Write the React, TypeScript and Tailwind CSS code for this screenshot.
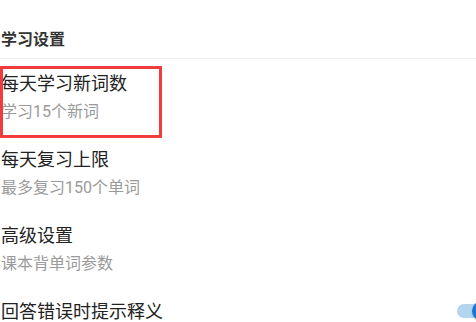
import React from "react";

const rows = [
  { title: "每天学习新词数", sub: "学习15个新词" },
  { title: "每天复习上限", sub: "最多复习150个单词" },
  { title: "高级设置", sub: "课本背单词参数" },
];

export default function App() {
  return (
    <div
      className="relative w-[476px] h-[322px] overflow-hidden bg-white"
      style={{ fontFamily: 'Roboto, "Noto Sans CJK SC", "Noto Sans", sans-serif' }}
    >
      <div className="h-[58px] pt-[28px] pl-[1px]">
        <div className="text-[16px] leading-[24px] font-bold text-[#333333]">学习设置</div>
      </div>
      <div className="h-px bg-[#f0f0f0]" />
      {rows.map((r) => (
        <div key={r.title} className="h-[76px] pt-[13px] pl-[1px] flex flex-col">
          <div className="text-[18px] leading-[24px] text-[#222222]">{r.title}</div>
          <div className="mt-[6px] text-[16px] leading-[20px] text-[#9a9a9a]">{r.sub}</div>
        </div>
      ))}
      <div className="h-[76px] pt-[13px] pl-[1px] flex items-start justify-between">
        <div className="text-[18px] leading-[24px] text-[#222222]">回答错误时提示释义</div>
        <div className="relative w-[34px] h-[24px] mr-[-15px] mt-[-1px] flex items-center">
          <div className="w-[34px] h-[14px] rounded-full bg-[#b3d5f0]" />
          <div className="absolute left-[15px] top-[2px] w-[20px] h-[20px] rounded-full bg-[#1976d2] shadow" />
        </div>
      </div>
      <div className="absolute left-0 top-[66px] w-[162px] h-[72px] border-[3px] border-[#f03c3c]" />
    </div>
  );
}
